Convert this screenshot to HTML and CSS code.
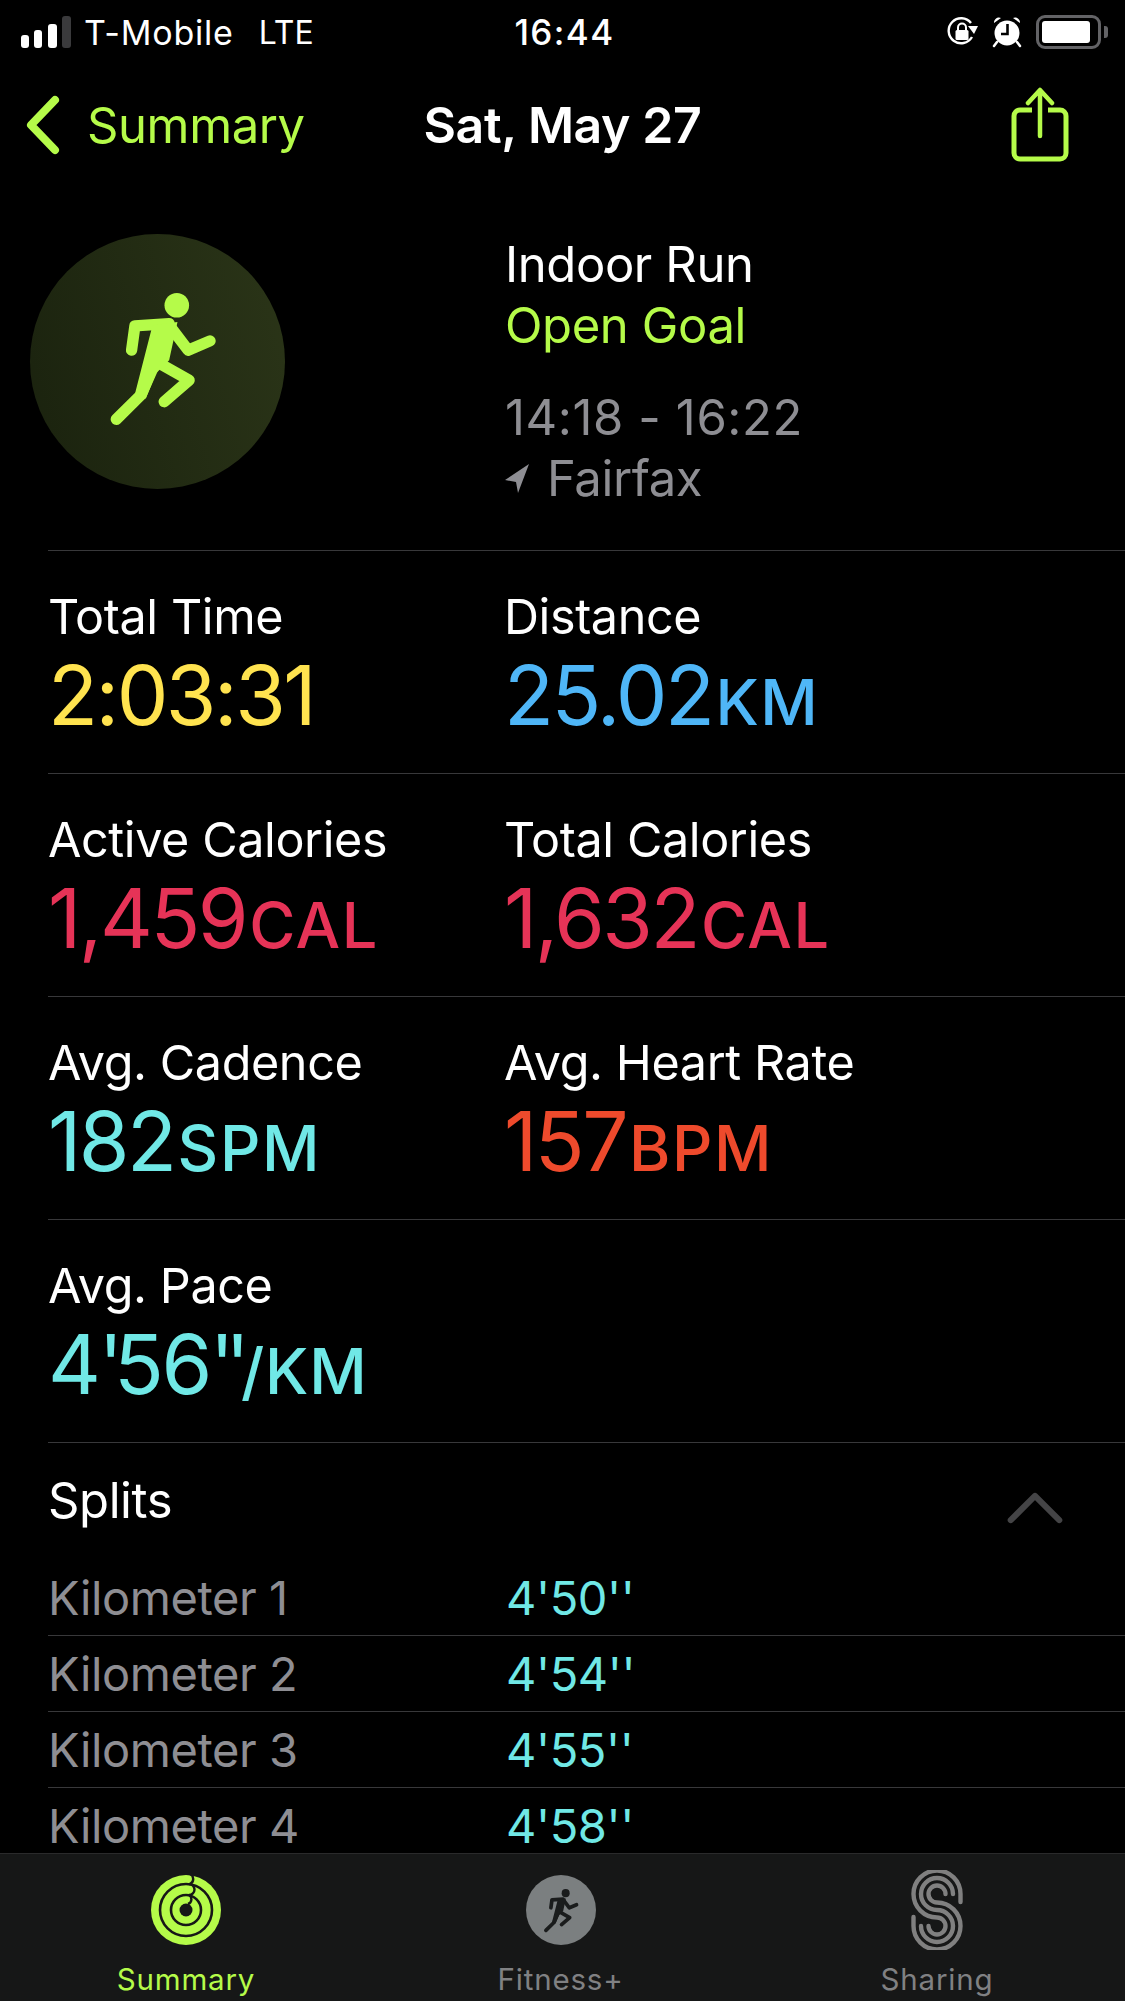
FILE: index.html
```html
<!DOCTYPE html>
<html lang="en">
<head>
<meta charset="utf-8">
<title>Indoor Run</title>
<link rel="stylesheet" href="styles.css">
</head>
<body>
<svg class="defs" width="0" height="0" aria-hidden="true">
  <defs>
    <symbol id="runner" viewBox="310 230 350 430">
      <circle cx="528" cy="285" r="37" fill="currentColor"/>
      <path d="M392 420 L402 347 L505 340 M505 345 L562 420 L628 392 M346 628 L420 555 L480 420 M485 465 L565 510 L490 575" fill="none" stroke="currentColor" stroke-width="34" stroke-linecap="round" stroke-linejoin="round"/>
      <path d="M455 345 L530 335 L505 450 L465 490 L435 565 L403 548 Z" fill="currentColor"/>
    </symbol>
  </defs>
</svg>
<div class="phone">
  <header class="status">
    <div class="status-left">
      <svg class="signal" viewBox="0 0 50 32" width="50" height="32">
        <rect x="0" y="19" width="8" height="13" rx="3" fill="#fff"/>
        <rect x="13" y="14" width="8" height="18" rx="3" fill="#fff"/>
        <rect x="27" y="8" width="9" height="24" rx="3" fill="#fff"/>
        <rect x="41" y="0" width="9" height="32" rx="3" fill="#3a3a3c"/>
      </svg>
      <span class="carrier">T-Mobile</span>
      <span class="network">LTE</span>
    </div>
    <div class="clock">16:44</div>
    <div class="status-right">
      <svg class="rotlock" viewBox="0 0 32 30" width="32" height="30">
        <path d="M25 20 A12.5 12.5 0 1 1 24 6" fill="none" stroke="#fff" stroke-width="2.4"/>
        <path d="M21 9 L31 9 L27 17 Z" fill="#fff"/>
        <rect x="8.500" y="13" width="13" height="10" rx="1.500" fill="#fff"/>
        <path d="M11 14 V10.500 a4 4 0 0 1 8 0 V14" fill="none" stroke="#fff" stroke-width="2"/>
      </svg>
      <svg class="alarm" viewBox="0 0 30 32" width="30" height="32">
        <circle cx="15" cy="17" r="12.500" fill="#fff"/>
        <path d="M2 7 a5 5 0 0 1 7 -5 Z M28 7 a5 5 0 0 0 -7 -5 Z" fill="#fff"/>
        <path d="M5 26 L2 30 M25 26 L28 30" stroke="#fff" stroke-width="2.500" stroke-linecap="round"/>
        <path d="M15.500 8 V18 H9" fill="none" stroke="#000" stroke-width="2.600"/>
      </svg>
      <div class="battery"><div class="battery-level"></div></div>
      <div class="battery-nub"></div>
    </div>
  </header>

  <nav class="navbar">
    <div class="nav-back">
      <svg class="chevron-back" viewBox="0 0 36 60" width="36" height="60">
        <path d="M30 5 L6 30 L30 55" fill="none" stroke="#b5fb49" stroke-width="8" stroke-linecap="round" stroke-linejoin="round"/>
      </svg>
      <span>Summary</span>
    </div>
    <div class="nav-title">Sat, May 27</div>
    <div class="nav-action">
      <svg class="share" viewBox="0 0 60 76" width="60" height="76">
        <path d="M21 23 H9 a6 6 0 0 0 -6 6 V66 a6 6 0 0 0 6 6 H49 a6 6 0 0 0 6 -6 V29 a6 6 0 0 0 -6 -6 H37" fill="none" stroke="#b5fb49" stroke-width="5"/>
        <path d="M29 49 V4 M17 16 L29 3 L41 16" fill="none" stroke="#b5fb49" stroke-width="4.500" stroke-linecap="round" stroke-linejoin="round"/>
      </svg>
    </div>
  </nav>

  <main class="content">
    <section class="workout">
      <div class="avatar">
        <svg class="avatar-runner" width="117" height="143"><use href="#runner"/></svg>
      </div>
      <div class="workout-info">
        <div class="line white">Indoor Run</div>
        <div class="line green">Open Goal</div>
        <div class="line gray time">14:18 - 16:22</div>
        <div class="line gray place">
          <svg class="locator" viewBox="0 0 24 29" width="24" height="29"><path d="M0 16 L24 0 L13 29 L11 18 Z" fill="#8e8e93"/></svg>
          <span>Fairfax</span>
        </div>
      </div>
    </section>

    <section class="stats">
      <div class="stat"><div class="label">Total Time</div><div class="value yellow">2:03:31</div></div>
      <div class="stat"><div class="label">Distance</div><div class="value blue">25.02<small>KM</small></div></div>
    </section>
    <section class="stats">
      <div class="stat"><div class="label">Active Calories</div><div class="value red">1,459<small>CAL</small></div></div>
      <div class="stat"><div class="label">Total Calories</div><div class="value red">1,632<small>CAL</small></div></div>
    </section>
    <section class="stats">
      <div class="stat"><div class="label">Avg. Cadence</div><div class="value cyan">182<small>SPM</small></div></div>
      <div class="stat"><div class="label">Avg. Heart Rate</div><div class="value orange">157<small>BPM</small></div></div>
    </section>
    <section class="stats">
      <div class="stat"><div class="label">Avg. Pace</div><div class="value cyan">4<span class="prime">'</span>56<span class="prime">''</span><small class="per">/KM</small></div></div>
    </section>

    <section class="splits">
      <div class="splits-head">
        <span>Splits</span>
        <svg class="chevron-up" viewBox="0 0 60 34" width="56" height="32"><path d="M4 30 L30 4 L56 30" fill="none" stroke="#444446" stroke-width="6.500" stroke-linecap="round" stroke-linejoin="round"/></svg>
      </div>
      <div class="split"><span class="split-name">Kilometer 1</span><span class="split-time">4'50''</span></div>
      <div class="split"><span class="split-name">Kilometer 2</span><span class="split-time">4'54''</span></div>
      <div class="split"><span class="split-name">Kilometer 3</span><span class="split-time">4'55''</span></div>
      <div class="split"><span class="split-name">Kilometer 4</span><span class="split-time">4'58''</span></div>
    </section>
  </main>

  <footer class="tabbar">
    <div class="tab tab-active">
      <svg class="tab-icon icon-rings" viewBox="-36 -36 72 72" width="72" height="72">
        <circle r="35" fill="#b5fb49"/>
        <circle r="26" fill="none" stroke="#171717" stroke-width="2.600"/>
        <circle r="15" fill="none" stroke="#171717" stroke-width="2.600"/>
        <circle r="6.500" fill="#171717"/>
        <path d="M4 -36 a5.500 5.500 0 0 1 0 10 M3 -26 a5.500 5.500 0 0 1 0 11 M3 -15 a5 5 0 0 1 -1 9" fill="none" stroke="#171717" stroke-width="2.400"/>
      </svg>
      <span>Summary</span>
    </div>
    <div class="tab">
      <div class="fitness-icon"><svg width="38" height="47"><use href="#runner"/></svg></div>
      <span>Fitness+</span>
    </div>
    <div class="tab">
      <svg class="tab-icon icon-sharing" viewBox="-26 -40 52 80" width="52" height="80">
        <g fill="none" stroke="#808080" stroke-width="4.400" stroke-linecap="round">
          <path d="M23.500 -8 V-16 A23.500 23.500 0 1 0 0 7.500 A8.500 8.500 0 1 1 -8.500 16"/>
          <path d="M16 -16 A16 16 0 1 0 0 0 A16 16 0 1 1 -16 16"/>
          <path d="M8.500 -16 A8.500 8.500 0 1 0 0 -7.500 A23.500 23.500 0 1 1 -23.500 16 V7"/>
        </g>
      </svg>
      <span>Sharing</span>
    </div>
  </footer>
</div>
</body>
</html>
```

FILE: styles.css
```css
* { box-sizing: border-box; }
html, body { margin: 0; padding: 0; background: #000; }
.defs { position: absolute; }
.phone {
  width: 1125px;
  height: 2001px;
  display: flex;
  flex-direction: column;
  overflow: hidden;
  background: #000;
  color: #fff;
  font-family: Inter, "Liberation Sans", sans-serif;
}

/* status bar */
.status {
  height: 64px;
  padding: 0 17px 0 21px;
  display: grid;
  grid-template-columns: 1fr auto 1fr;
  align-items: center;
  flex: none;
}
.status-left { display: flex; align-items: center; font-size: 34px; letter-spacing: 0.8px; }
.signal { margin-right: 13px; }
.carrier { margin-right: 25px; }
.network { font-size: 32px; letter-spacing: 0; }
.clock { font-size: 35px; font-weight: 500; letter-spacing: 1.4px; }
.status-right { display: flex; align-items: center; justify-content: flex-end; }
.rotlock { margin-right: 13px; }
.alarm { margin-right: 14px; }
.battery {
  width: 65px;
  height: 34px;
  border: 3px solid #636366;
  border-radius: 9px;
  padding: 3px;
}
.battery-level { width: 48px; height: 22px; background: #fff; border-radius: 3px; }
.battery-nub { width: 4px; height: 12px; margin-left: 3px; background: #636366; border-radius: 0 3px 3px 0; }

/* nav bar */
.navbar {
  height: 126px;
  padding: 0 54px 4px 54px;
  display: grid;
  grid-template-columns: 1fr auto 1fr;
  align-items: center;
  flex: none;
}
.nav-back { display: flex; align-items: center; margin-left: -29px; color: #b5fb49; font-size: 49px; letter-spacing: -0.4px; }
.chevron-back { margin-right: 26px; }
.nav-title { font-size: 50px; font-weight: 600; letter-spacing: -0.4px; }
.nav-action { display: flex; justify-content: flex-end; }

/* main */
.content { flex: 1; min-height: 0; overflow: hidden; }
.workout {
  height: 361px;
  margin-left: 48px;
  padding-top: 44px;
  display: grid;
  grid-template-columns: 457px 1fr;
  align-items: start;
  border-bottom: 1.500px solid #38383a;
}
.avatar {
  width: 255px;
  height: 255px;
  margin-left: -18px;
  border-radius: 50%;
  background: linear-gradient(75deg, #1a220e, #2b3518);
  display: flex;
  align-items: center;
  justify-content: center;
  color: #b5fb49;
}
.avatar-runner { display: block; margin: 0 0 7px 9px; }
.workout-info { margin-top: 0; }
.line { font-size: 49px; line-height: 61px; letter-spacing: -0.4px; }
.white { color: #fff; }
.green { color: #b5fb49; }
.gray { color: #8e8e93; }
.time { margin-top: 31px; letter-spacing: 0.6px; }
.place { display: flex; align-items: center; }
.locator { margin-right: 18px; }

.stats {
  height: 223px;
  margin-left: 48px;
  padding: 36px 0 0 0;
  display: grid;
  grid-template-columns: 456px 1fr;
  align-items: start;
  border-bottom: 1.500px solid #38383a;
}
.label { font-size: 48.500px; line-height: 60px; letter-spacing: -0.4px; }
.value { font-size: 82px; line-height: 90px; margin-top: 4px; letter-spacing: -2.500px; font-weight: 400; white-space: nowrap; }
.value small { font-size: 63px; font-weight: 500; letter-spacing: 1.6px; margin-left: 3px; }
.value .per { margin-left: 0; letter-spacing: 0.8px; }
.prime { letter-spacing: -9px; }
.yellow { color: #ffe34f; }
.blue { color: #4fb6f7; }
.red { color: #e63357; }
.cyan { color: #70e8e6; }
.orange { color: #ee4a2c; }

/* splits */
.splits { margin-left: 48px; }
.splits-head {
  height: 117px;
  padding: 0 62px 2px 0;
  display: flex;
  align-items: center;
  justify-content: space-between;
  font-size: 49px;
  letter-spacing: -0.4px;
}
.chevron-up { margin-top: 14px; }
.split {
  height: 76px;
  display: grid;
  grid-template-columns: 457px 1fr;
  align-items: center;
  font-size: 47px;
  letter-spacing: -0.4px;
  border-bottom: 1.500px solid #38383a;
}
.split-name { color: #8e8e93; }
.split-time { color: #70e8e6; margin-left: 1px; }

/* tab bar */
.tabbar {
  height: 148px;
  flex: none;
  background: #161717;
  border-top: 1.500px solid #2a2a2b;
  display: grid;
  grid-template-columns: 372px 377px 376px;
  color: #808183;
  font-size: 29.500px;
  letter-spacing: 0.8px;
}
.tab {
  display: flex;
  flex-direction: column;
  align-items: center;
  justify-content: flex-end;
  padding-bottom: 4px;
}
.tab span { line-height: 36px; }
.tab-active { color: #b5fb49; }
.tab-icon { display: block; }
.icon-rings { margin-bottom: 15px; }
.icon-sharing { margin-bottom: 11px; }
.fitness-icon {
  width: 70px;
  height: 70px;
  margin-bottom: 16px;
  border-radius: 50%;
  background: #7b7f80;
  color: #1a1c1c;
  display: flex;
  align-items: center;
  justify-content: center;
}
```
